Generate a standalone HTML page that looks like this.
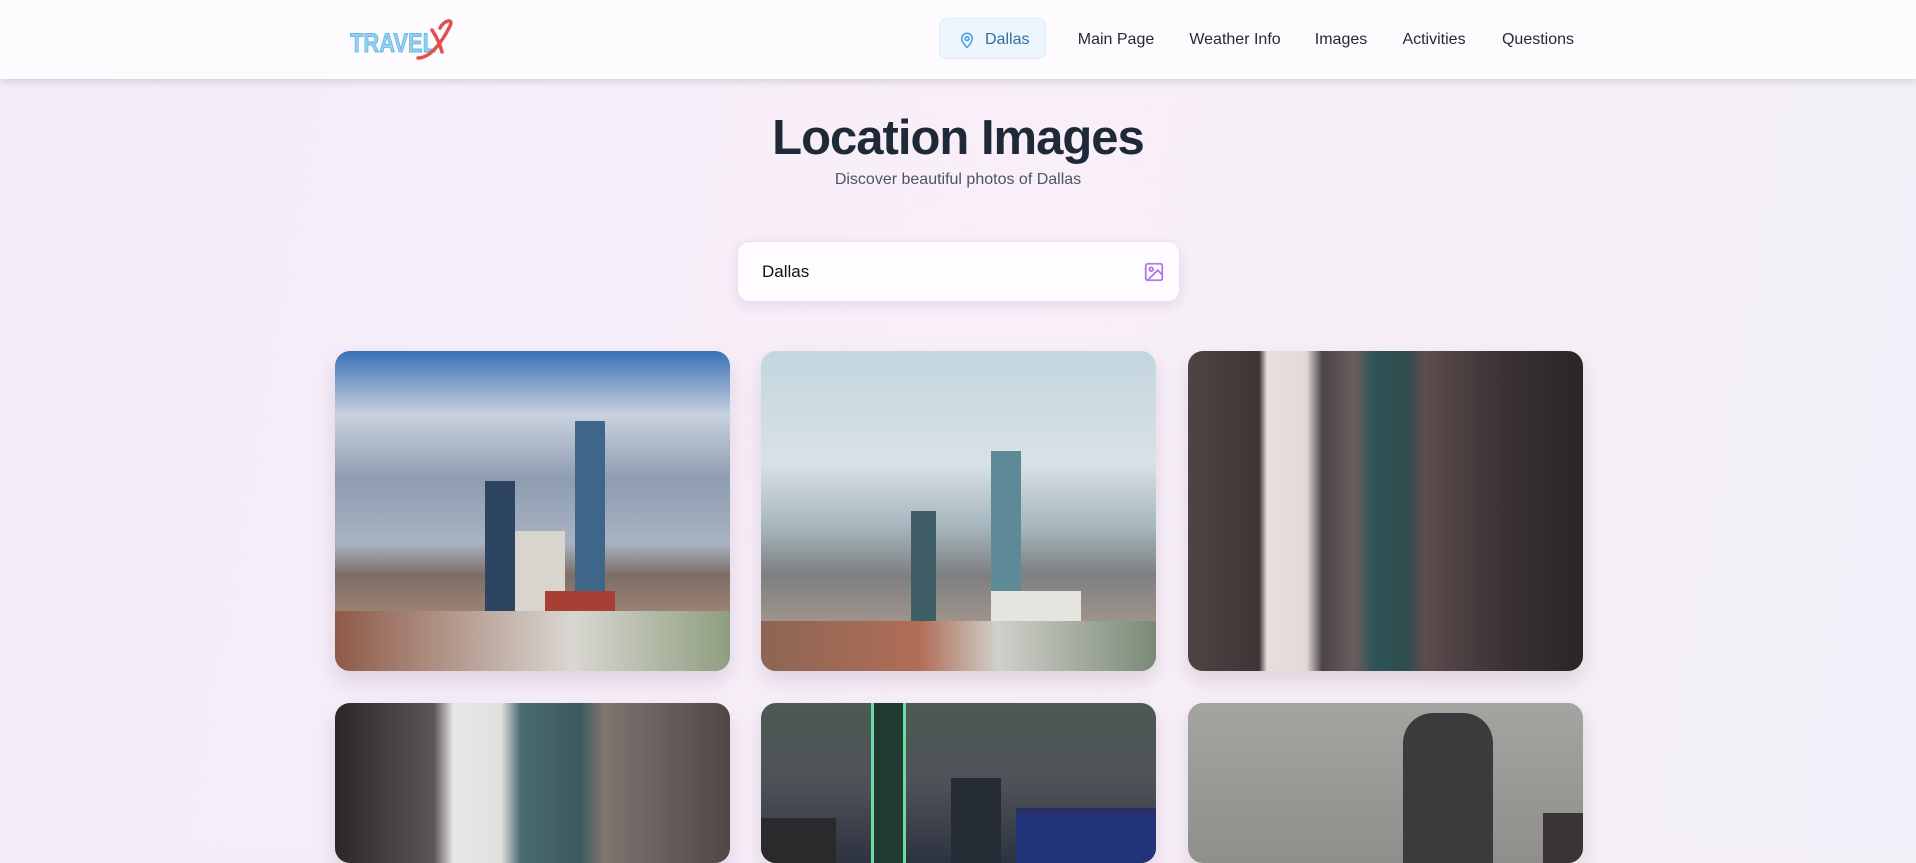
<!DOCTYPE html>
<html><head><meta charset="utf-8"><style>
*{margin:0;padding:0;box-sizing:border-box}
body{width:1916px;height:845px;overflow:hidden;font-family:"Liberation Sans",sans-serif;background:linear-gradient(100deg,#f3ecf9 0%,#f8eff8 50%,#f6eff6 80%,#eff0f8 100%);position:relative}
.nav{position:absolute;left:0;top:0;width:1916px;height:79px;background:#fdfbfe;box-shadow:0 2px 8px rgba(0,0,0,.15)}
.logo{position:absolute;left:346px;top:16px;width:116px;height:48px}
.pill{position:absolute;left:939px;top:18px;width:107px;height:41px;background:#eef6fd;border:1px solid #dcebf8;border-radius:8px;color:#2f6fa8;font-size:16px}
.pill span{position:absolute;left:45px;top:12px}
.nl{position:absolute;top:31px;font-size:16px;color:#1f2937;transform:translateX(-50%)}
h1{position:absolute;left:0;width:1916px;top:110px;text-align:center;font-size:49px;font-weight:bold;color:#1f2937;letter-spacing:-1px}
.sub{position:absolute;left:0;width:1916px;top:171px;text-align:center;font-size:16px;color:#4b5563}
.search{position:absolute;left:737px;top:241px;width:443px;height:61px;background:#fefcff;border:1px solid #eae0f6;border-radius:12px;box-shadow:0 4px 12px rgba(120,90,160,.15)}
.search span{position:absolute;left:24px;top:20px;font-size:17px;color:#111}
.card{position:absolute;width:395px;border-radius:15px;overflow:hidden;box-shadow:0 10px 20px rgba(80,50,90,.15)}
.b{position:absolute;bottom:0}
</style></head><body>
<div class="nav">
<svg class="logo" viewBox="0 0 116 48"><text x="4" y="36" font-family="Liberation Sans" font-weight="bold" font-size="27" fill="#8fd2f3" stroke="#4fa9dc" stroke-width=".7" textLength="86" lengthAdjust="spacingAndGlyphs">TRAVEL</text><path d="M72 42 C86 42 98 22 104 10 C108 2 98 4 94 12 M86 14 C90 20 94 28 96 36" stroke="#e0504c" stroke-width="3.5" fill="none" stroke-linecap="round"/></svg>
<div class="pill"><svg style="position:absolute;left:18px;top:11px" width="18" height="20" viewBox="0 0 24 24" fill="none" stroke="#4a9be0" stroke-width="2"><path d="M12 22s7-6.5 7-12a7 7 0 0 0-14 0c0 5.5 7 12 7 12z"/><circle cx="12" cy="10" r="2.5"/></svg><span>Dallas</span></div>
<div class="nl" style="left:1116px">Main Page</div>
<div class="nl" style="left:1235px">Weather Info</div>
<div class="nl" style="left:1341px">Images</div>
<div class="nl" style="left:1434px">Activities</div>
<div class="nl" style="left:1538px">Questions</div>
</div>
<h1>Location Images</h1>
<div class="sub">Discover beautiful photos of Dallas</div>
<div class="search"><span>Dallas</span><svg style="position:absolute;left:405px;top:19px" width="22" height="22" viewBox="0 0 24 24" fill="none" stroke="#b07ae8" stroke-width="2"><rect x="3" y="3" width="18" height="18" rx="2"/><circle cx="9" cy="9" r="2"/><path d="M21 15l-5-5L5 21"/></svg></div>

<div class="card" style="left:335px;top:351px;height:320px;background:linear-gradient(180deg,#3a6fb8 0%,#c9d2de 20%,#8e9cb0 40%,#a8b3c2 60%,#7c6e66 70%,#a58976 85%,#b5a591 100%)">
<div class="b" style="left:240px;width:30px;height:250px;background:#3d6689"></div>
<div class="b" style="left:150px;width:30px;height:190px;background:#2d4560"></div>
<div class="b" style="left:180px;width:50px;height:140px;background:#d8d5cc"></div>
<div class="b" style="left:210px;width:70px;height:80px;background:#a64034"></div>
<div class="b" style="left:0;width:395px;height:60px;background:linear-gradient(90deg,#8e5a48,#d9d7d1 60%,#8f9e80)"></div>
</div>
<div class="card" style="left:761px;top:351px;height:320px;background:linear-gradient(180deg,#c4d6de 0%,#d8e1e6 35%,#a6b6bd 55%,#7e7f80 70%,#a0948b 85%,#9c8a7e 100%)">
<div class="b" style="left:230px;width:30px;height:220px;background:#5e8a98"></div>
<div class="b" style="left:150px;width:25px;height:160px;background:#3f5e66"></div>
<div class="b" style="left:230px;width:90px;height:80px;background:#e6e4df"></div>
<div class="b" style="left:0;width:395px;height:50px;background:linear-gradient(90deg,#8c6654,#b06d57 40%,#d0d0ca 60%,#7a8a76)"></div>
</div>
<div class="card" style="left:1188px;top:351px;height:320px;background:linear-gradient(90deg,#4d4444 0%,#3e3636 18%,#e9dede 20%,#e5d8d8 30%,#4a4446 34%,#6b5d5e 42%,#2e5457 47%,#2f4c4e 55%,#5c4c4e 60%,#3b3233 80%,#2a2626 100%)"></div>
<div class="card" style="left:335px;top:703px;height:160px;background:linear-gradient(90deg,#2a2728 0%,#5b5556 25%,#e8e6e6 30%,#e1e1e0 42%,#4a6b70 47%,#3b5a5d 62%,#807470 68%,#4f4646 100%)"></div>
<div class="card" style="left:761px;top:703px;height:160px;background:linear-gradient(180deg,#4c5a52 0%,#4e5258 50%,#2d3340 100%)">
<div class="b" style="left:110px;width:35px;height:160px;background:#1f3a2e;border-left:3px solid #6fd9a8;border-right:3px solid #6fd9a8"></div>
<div class="b" style="left:190px;width:50px;height:85px;background:#252b35"></div>
<div class="b" style="left:255px;width:140px;height:55px;background:#23357a;border-top:6px solid #2a2f63"></div>
<div class="b" style="left:0;width:75px;height:45px;background:#2a2a2c"></div>
</div>
<div class="card" style="left:1188px;top:703px;height:160px;background:linear-gradient(180deg,#a4a4a0,#8e8e8b)">
<div class="b" style="left:215px;width:90px;height:150px;background:#3c3a3d;border-radius:30px 30px 0 0"></div>
<div class="b" style="left:355px;width:40px;height:50px;background:#3a3436"></div>
</div>
</body></html>
